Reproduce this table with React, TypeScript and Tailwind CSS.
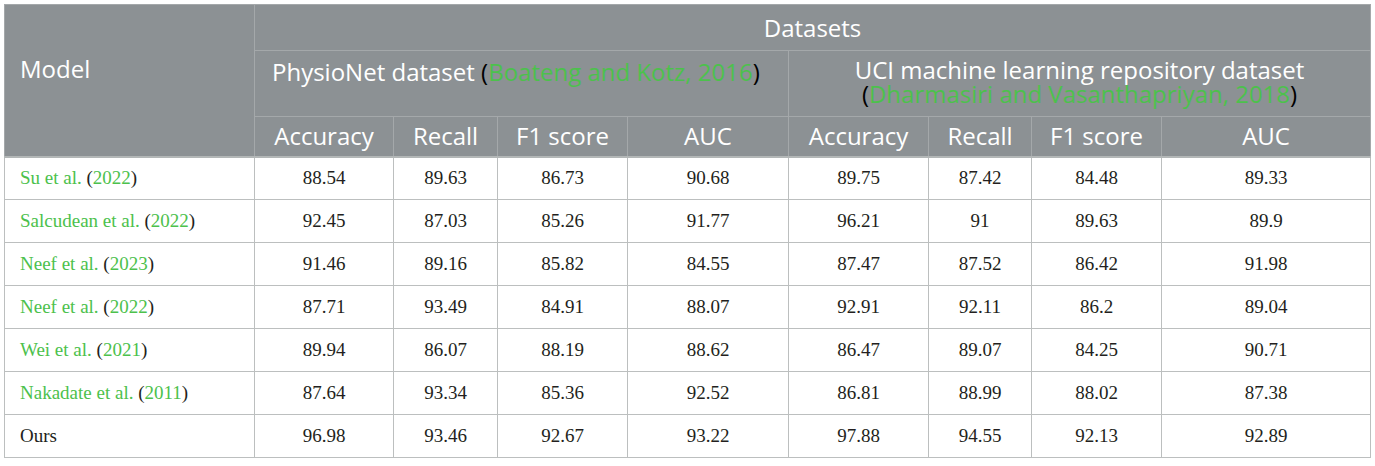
const green = "text-[#4cc14c]";

type Row = { name: string; year?: string; values: string[] };

const rows: Row[] = [
  { name: "Su et al.", year: "2022", values: ["88.54", "89.63", "86.73", "90.68", "89.75", "87.42", "84.48", "89.33"] },
  { name: "Salcudean et al.", year: "2022", values: ["92.45", "87.03", "85.26", "91.77", "96.21", "91", "89.63", "89.9"] },
  { name: "Neef et al.", year: "2023", values: ["91.46", "89.16", "85.82", "84.55", "87.47", "87.52", "86.42", "91.98"] },
  { name: "Neef et al.", year: "2022", values: ["87.71", "93.49", "84.91", "88.07", "92.91", "92.11", "86.2", "89.04"] },
  { name: "Wei et al.", year: "2021", values: ["89.94", "86.07", "88.19", "88.62", "86.47", "89.07", "84.25", "90.71"] },
  { name: "Nakadate et al.", year: "2011", values: ["87.64", "93.34", "85.36", "92.52", "86.81", "88.99", "88.02", "87.38"] },
  { name: "Ours", values: ["96.98", "93.46", "92.67", "93.22", "97.88", "94.55", "92.13", "92.89"] },
];

const metrics = ["Accuracy", "Recall", "F1 score", "AUC"];
const widths = ["w-[250px]", "w-[139px]", "w-[104px]", "w-[130px]", "w-[161px]", "w-[140px]", "w-[103px]", "w-[130px]", "w-[209px]"];

const head = "border border-[#a4a8aa] font-normal";

export default function App() {
  return (
    <div className="min-h-screen bg-white pl-[4px] pt-[4px]">
      <table className="w-[1366px] table-fixed border-collapse border border-[#c4c7c7]">
        <colgroup>
          {widths.map((w, i) => (
            <col key={i} className={w} />
          ))}
        </colgroup>
        <thead className="bg-[#8c9194] text-[24px] leading-[24px] text-white [font-family:'Open_Sans',sans-serif]">
          <tr className="h-[46px]">
            <th rowSpan={3} className={`${head} px-[15px] pt-[52px] text-left align-top`}>
              Model
            </th>
            <th colSpan={8} className={`${head} text-center`}>
              Datasets
            </th>
          </tr>
          <tr className="h-[66px]">
            <th colSpan={4} className={`${head} px-[17px] pt-[9px] text-left align-top`}>
              PhysioNet dataset <span className="text-black">(</span>
              <span className={green}>Boateng and Kotz, 2016</span>
              <span className="text-black">)</span>
            </th>
            <th colSpan={4} className={`${head} px-[8px] pt-[7px] pb-[10px] text-center align-top`}>
              UCI machine learning repository dataset
              <br />
              <span className="text-black">(</span>
              <span className={green}>Dharmasiri and Vasanthapriyan, 2018</span>
              <span className="text-black">)</span>
            </th>
          </tr>
          <tr className="h-[40px] border-b-2 border-b-[#b3b7b7]">
            {[...metrics, ...metrics].map((m, i) => (
              <th key={i} className={`${head} text-center`}>
                {m}
              </th>
            ))}
          </tr>
        </thead>
        <tbody className="text-[19px] text-[#231f20] [font-family:'Liberation_Serif',serif]">
          {rows.map((r, i) => (
            <tr key={i} className="h-[43px]">
              <td className="border border-[#bcbfbf] px-[15px] text-left">
                {r.year ? (
                  <>
                    <span className={green}>{r.name}</span> (<span className={green}>{r.year}</span>)
                  </>
                ) : (
                  r.name
                )}
              </td>
              {r.values.map((v, j) => (
                <td key={j} className="border border-[#bcbfbf] text-center">
                  {v}
                </td>
              ))}
            </tr>
          ))}
        </tbody>
      </table>
    </div>
  );
}
